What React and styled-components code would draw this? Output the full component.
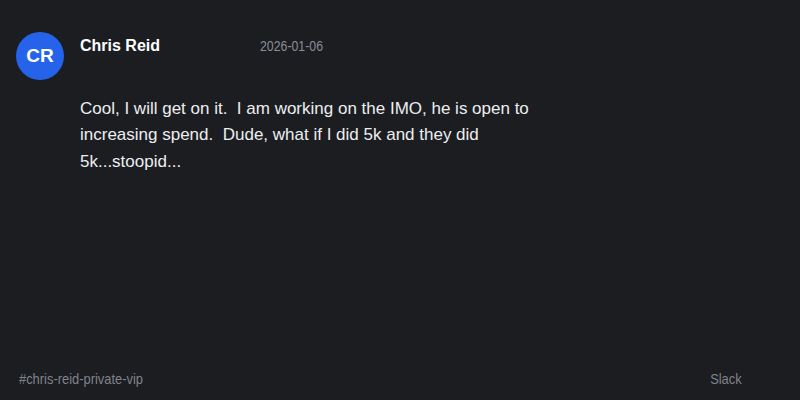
import React from "react";
import styled, { createGlobalStyle } from "styled-components";

const GlobalStyle = createGlobalStyle`
  html, body { margin: 0; padding: 0; background: #1b1d21; }
  body { font-family: "Liberation Sans", Arial, sans-serif; }
  #root { height: 100vh; }
`;

const Page = styled.div`
  height: 100vh;
  box-sizing: border-box;
  display: flex;
  flex-direction: column;
  background: #1b1d21;
  color: #e8e9eb;
`;

const Body = styled.main`
  flex: 1;
  padding: 32px 16px 0 16px;
`;

const Header = styled.header`
  display: flex;
  gap: 16px;
  align-items: flex-start;
`;

const Avatar = styled.div`
  width: 48px;
  height: 48px;
  border-radius: 50%;
  background: #2563eb;
  color: #ffffff;
  display: flex;
  align-items: center;
  justify-content: center;
  font-weight: 700;
  font-size: 19px;
  flex-shrink: 0;
`;

const Meta = styled.div`
  display: grid;
  grid-template-columns: 180px auto;
  align-items: baseline;
`;

const Name = styled.span`
  font-size: 16px;
  font-weight: 700;
  line-height: 28px;
  color: #ffffff;
`;

const Muted = styled.span`
  display: inline-block;
  font-family: "Liberation Sans", Arial, sans-serif;
  font-size: ${(p) => p.$size}px;
  color: ${(p) => p.$color};
  transform: scaleX(${(p) => p.$scale || 0.86});
  transform-origin: ${(p) => (p.$right ? "right" : "left")} center;
`;

const Message = styled.p`
  margin: 16px 0 0 64px;
  max-width: 480px;
  font-size: 17px;
  line-height: 26.3px;
  white-space: pre-wrap;
  color: #eceef0;
`;

const Footer = styled.footer`
  display: flex;
  justify-content: space-between;
  align-items: baseline;
  padding: 0 58px 12px 19px;
  line-height: 18px;
`;

export default function App() {
  return (
    <>
      <GlobalStyle />
      <Page>
        <Body>
          <Header>
            <Avatar>CR</Avatar>
            <Meta>
              <Name>Chris Reid</Name>
              <Muted $size={14} $scale={0.88} $color="#8b8e95">2026-01-06</Muted>
            </Meta>
          </Header>
          <Message>
            {"Cool, I will get on it.  I am working on the IMO, he is open to increasing spend.  Dude, what if I did 5k and they did 5k...stoopid..."}
          </Message>
        </Body>
        <Footer>
          <Muted $size={15} $color="#80838a">#chris-reid-private-vip</Muted>
          <Muted $size={15} $color="#80838a" $right>Slack</Muted>
        </Footer>
      </Page>
    </>
  );
}
